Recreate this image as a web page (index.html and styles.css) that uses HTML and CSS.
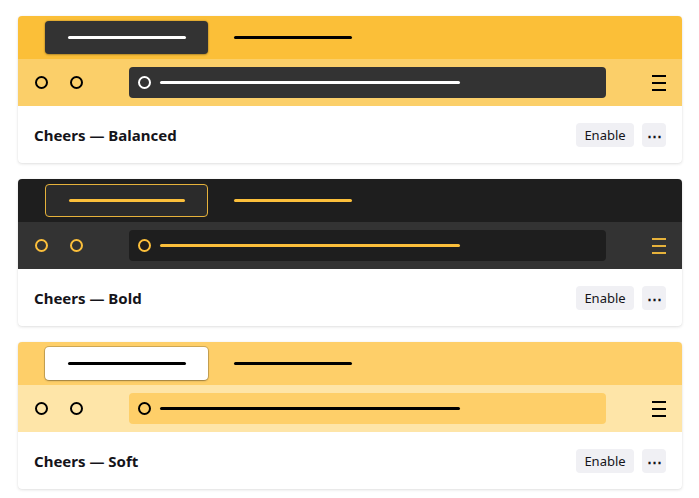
FILE: index.html
```html
<!DOCTYPE html>
<html lang="en">
<head>
<meta charset="utf-8">
<title>Themes</title>
<link rel="stylesheet" href="styles.css">
</head>
<body>
<main class="list">
  <section class="card theme-balanced">
    <div class="preview">
      <div class="tabstrip">
        <div class="tab tab-active"><span class="bar"></span></div>
        <div class="tab"><span class="bar"></span></div>
      </div>
      <div class="toolbar">
        <span class="btn-circle"></span>
        <span class="btn-circle"></span>
        <div class="urlbar"><span class="url-circle"></span><span class="url-line"></span></div>
        <span class="menu"><i></i><i></i><i></i></span>
      </div>
    </div>
    <div class="footer">
      <h2 class="title">Cheers — Balanced</h2>
      <div class="actions">
        <button class="enable">Enable</button>
        <button class="more">⋯</button>
      </div>
    </div>
  </section>

  <section class="card theme-bold">
    <div class="preview">
      <div class="tabstrip">
        <div class="tab tab-active"><span class="bar"></span></div>
        <div class="tab"><span class="bar"></span></div>
      </div>
      <div class="toolbar">
        <span class="btn-circle"></span>
        <span class="btn-circle"></span>
        <div class="urlbar"><span class="url-circle"></span><span class="url-line"></span></div>
        <span class="menu"><i></i><i></i><i></i></span>
      </div>
    </div>
    <div class="footer">
      <h2 class="title">Cheers — Bold</h2>
      <div class="actions">
        <button class="enable">Enable</button>
        <button class="more">⋯</button>
      </div>
    </div>
  </section>

  <section class="card theme-soft">
    <div class="preview">
      <div class="tabstrip">
        <div class="tab tab-active"><span class="bar"></span></div>
        <div class="tab"><span class="bar"></span></div>
      </div>
      <div class="toolbar">
        <span class="btn-circle"></span>
        <span class="btn-circle"></span>
        <div class="urlbar"><span class="url-circle"></span><span class="url-line"></span></div>
        <span class="menu"><i></i><i></i><i></i></span>
      </div>
    </div>
    <div class="footer">
      <h2 class="title">Cheers — Soft</h2>
      <div class="actions">
        <button class="enable">Enable</button>
        <button class="more">⋯</button>
      </div>
    </div>
  </section>
</main>
</body>
</html>
```

FILE: styles.css
```css
* { box-sizing: border-box; }

html, body {
  margin: 0;
  padding: 0;
  background: #ffffff;
  font-family: "Noto Sans", "Open Sans", sans-serif;
  color: #15141a;
}

.list {
  display: flex;
  flex-direction: column;
  gap: 16px;
  padding: 16px 17px 16px 18px;
}

.card {
  border-radius: 4px;
  overflow: hidden;
  background: #ffffff;
  box-shadow: 0 1px 3px rgba(0, 0, 0, 0.12), 0 0 1px rgba(0, 0, 0, 0.08);
}

.tabstrip {
  height: 43px;
  display: flex;
  align-items: center;
  padding-left: 27px;
  gap: 3px;
}

.tab {
  width: 163px;
  height: 33px;
  border-radius: 4px;
  display: flex;
  align-items: center;
  padding: 0 22px 0 23px;
}

.bar {
  display: block;
  height: 3px;
  width: 118px;
  border-radius: 2px;
}

.toolbar {
  height: 47px;
  display: flex;
  align-items: center;
  padding: 0 16px 0 17px;
}

.btn-circle {
  width: 13px;
  height: 13px;
  border-radius: 50%;
  border: 2px solid;
  flex: none;
}

.btn-circle + .btn-circle { margin-left: 22px; }

.urlbar {
  flex: 1;
  height: 31px;
  margin: 0 46px;
  border-radius: 4px;
  display: flex;
  align-items: center;
  padding-left: 9px;
}

.url-circle {
  width: 13px;
  height: 13px;
  border-radius: 50%;
  border: 2px solid;
  flex: none;
}

.url-line {
  height: 3px;
  width: 300px;
  margin-left: 9px;
  border-radius: 2px;
}

.menu {
  width: 14px;
  height: 16px;
  display: flex;
  flex-direction: column;
  justify-content: space-between;
  flex: none;
}

.menu i {
  display: block;
  height: 2px;
}

.footer {
  height: 57px;
  display: flex;
  align-items: center;
  justify-content: space-between;
  padding: 0 16px;
}

.title {
  margin: 0;
  font-size: 15px;
  font-weight: 700;
  color: #15141a;
}

.actions {
  display: flex;
  gap: 8px;
}

.enable, .more {
  border: none;
  background: #f0f0f4;
  border-radius: 4px;
  height: 24px;
  font-family: "Noto Sans", "Open Sans", sans-serif;
  font-size: 13px;
  color: #15141a;
  padding: 0;
  display: flex;
  align-items: center;
  justify-content: center;
}

.enable { width: 58px; }
.more { width: 24px; font-size: 15px; font-weight: 700; }

/* Balanced */
.theme-balanced .tabstrip { background: #fbbf38; }
.theme-balanced .tab-active {
  background: #333333;
  box-shadow: 0 0 2px rgba(0, 0, 0, 0.35), 0 1px 2px rgba(0, 0, 0, 0.2);
}
.theme-balanced .tab-active .bar { background: #ffffff; }
.theme-balanced .tab .bar { background: #000000; }
.theme-balanced .tab-active .bar { background: #ffffff; }
.theme-balanced .toolbar { background: #fbcf69; }
.theme-balanced .btn-circle { border-color: #000000; }
.theme-balanced .urlbar { background: #333333; }
.theme-balanced .url-circle { border-color: #ffffff; }
.theme-balanced .url-line { background: #ffffff; }
.theme-balanced .menu i { background: #000000; }

/* Bold */
.theme-bold .tabstrip { background: #1e1e1e; }
.theme-bold .tab-active {
  background: #2b2b2b;
  border: 1.5px solid #e6b23b;
}
.theme-bold .tab .bar { background: #fbbf3b; }
.theme-bold .toolbar { background: #333333; }
.theme-bold .btn-circle { border-color: #fbbf3b; }
.theme-bold .urlbar { background: #1e1e1e; }
.theme-bold .url-circle { border-color: #fbbf3b; }
.theme-bold .url-line { background: #fbbf3b; }
.theme-bold .menu i { background: #e6b23b; }

/* Soft */
.theme-soft .tabstrip { background: #fecf69; }
.theme-soft .tab-active {
  background: #ffffff;
  box-shadow: 0 0 0 1px rgba(0, 0, 0, 0.18), 0 1px 2px rgba(0, 0, 0, 0.25);
}
.theme-soft .tab .bar { background: #000000; }
.theme-soft .toolbar { background: #fee5a8; }
.theme-soft .btn-circle { border-color: #000000; }
.theme-soft .urlbar { background: #fecf69; }
.theme-soft .url-circle { border-color: #000000; }
.theme-soft .url-line { background: #000000; }
.theme-soft .menu i { background: #000000; }
```
